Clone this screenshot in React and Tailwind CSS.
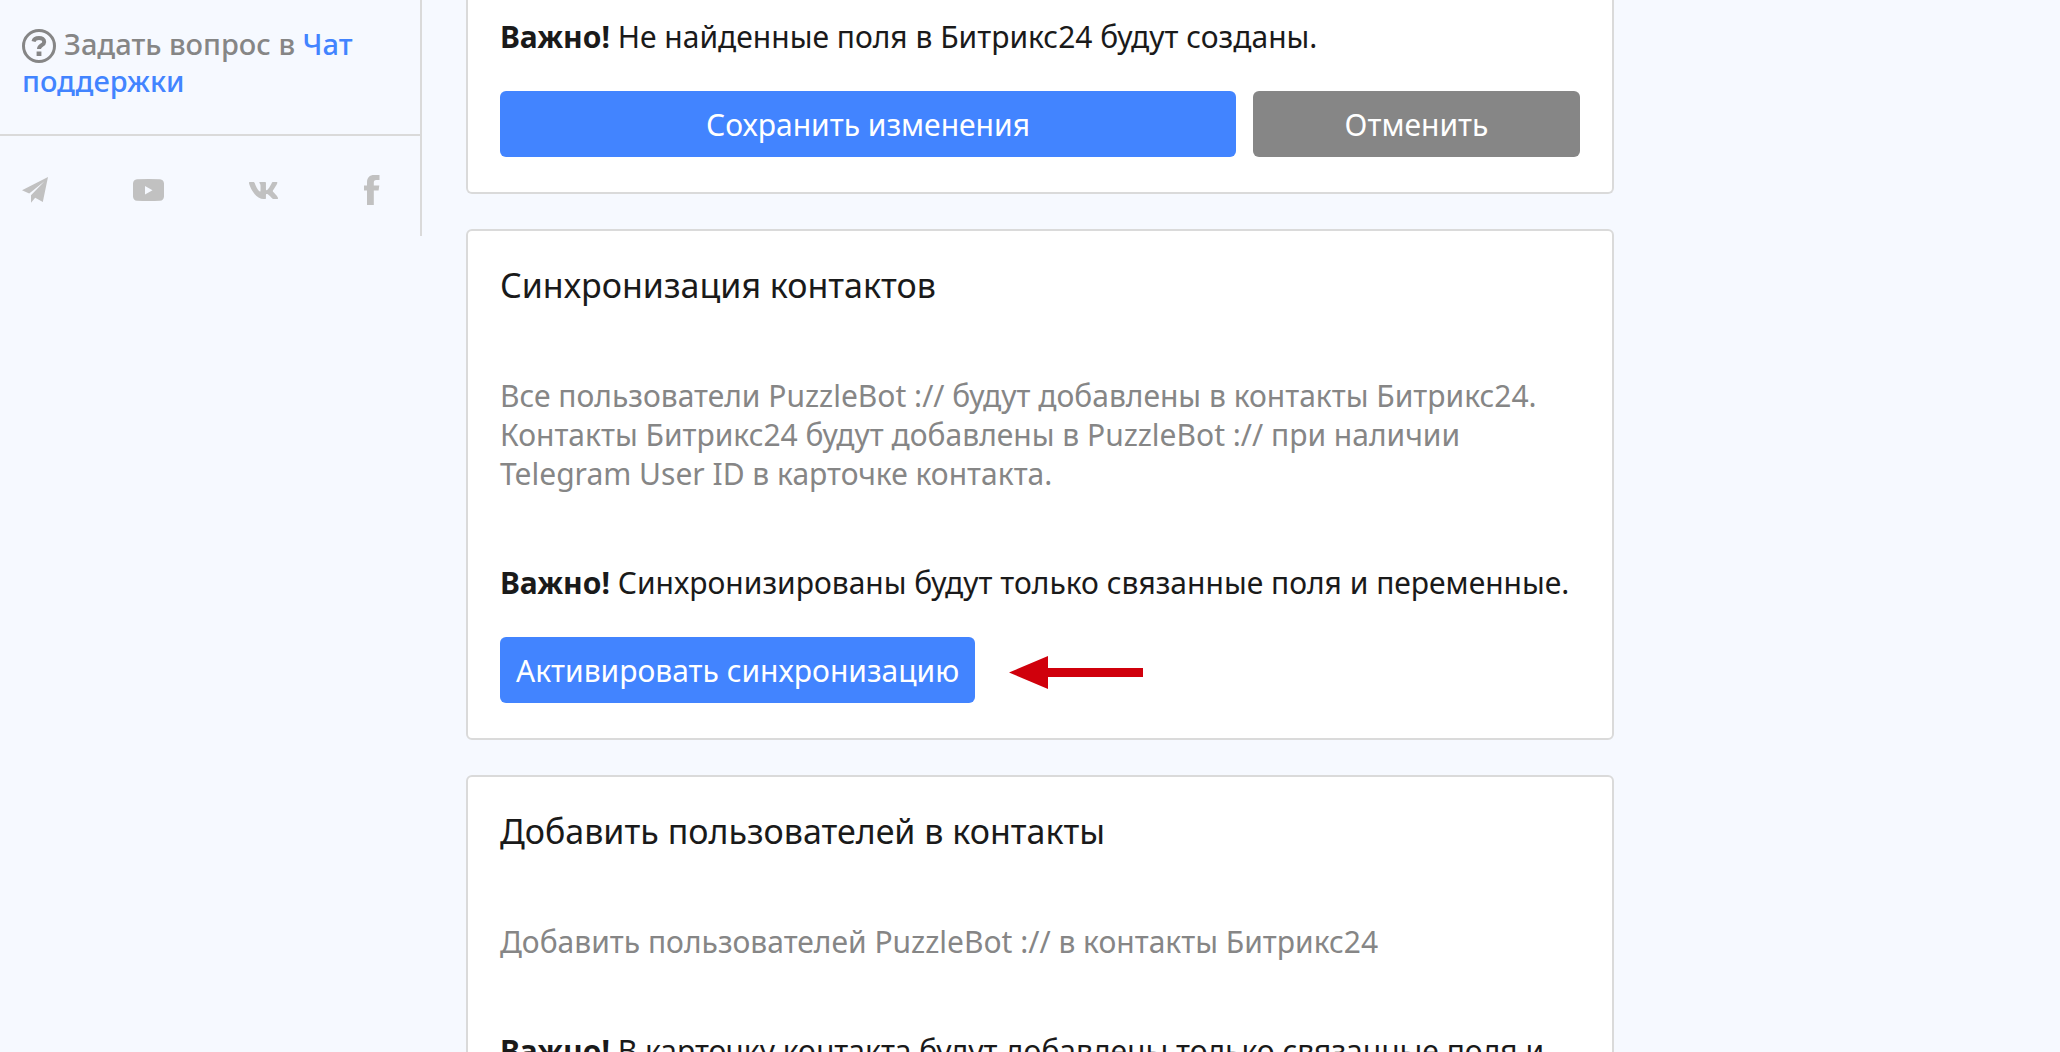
import React from "react";
import { FaVk } from "react-icons/fa";

function Card({ title, children }) {
  return (
    <section className="rounded-md border-2 border-[#dadada] bg-white px-8 pt-[34px] pb-[35px]">
      <h2 className="mb-[70px] text-[34px] leading-[41px]">{title}</h2>
      {children}
    </section>
  );
}

function Button({ className, children }) {
  return (
    <button type="button" className={"h-[66px] rounded-md px-4 text-[30px] leading-[39px] text-white " + className}>
      {children}
    </button>
  );
}

function Important({ children }) {
  return (
    <p>
      <strong className="font-bold">Важно!</strong> {children}
    </p>
  );
}

function Sidebar() {
  return (
    <aside className="w-[422px] shrink-0 self-start border-r-2 border-[#dadada]">
      <p className="border-b-2 border-[#dadada] px-[22px] pt-[26px] pb-9 text-[29px] leading-[35px] font-medium text-[#868686]">
        <svg className="mr-2 inline-block size-[34px] align-[-8px]" viewBox="0 0 34 34" fill="none" stroke="currentColor">
          <circle cx="17" cy="17" r="15.5" strokeWidth="3" />
          <path d="M11.500 12.500c.5-2.400 2.700-3.500 5.500-3.500s5.200 1.300 5.200 3.900c0 3.300-5.200 3.300-5.200 7.100" strokeWidth="4" />
          <path d="M17 22.500v4.500" strokeWidth="4.800" />
        </svg>
        Задать вопрос в{" "}
        <a href="#chat" className="text-[#4284ff]">Чат поддержки</a>
      </p>
      <nav className="flex h-[100px] items-center justify-between pt-2 pr-10 pl-[22px] text-[#c1c1c1]">
        <a href="#telegram" aria-label="Telegram">
          <svg className="size-[26px]" viewBox="0 0 26 26" fill="currentColor">
            <path d="M26 0 0 13.200l7.200 3.300L22.500 4.200 9 18.200v7.500l4.200-5 7.600 4.300Z" />
          </svg>
        </a>
        <a href="#youtube" aria-label="YouTube">
          <svg className="h-[22px] w-[31px]" viewBox="0 0 31 22" fill="currentColor">
            <path fillRule="evenodd" d="M4 .2Q15.500-.2 27 .2Q30.700.6 31 4.500V17.500Q30.700 21.400 27 21.800Q15.500 22.200 4 21.800Q.3 21.400 0 17.500V4.500Q.3.600 4 .2ZM12 7v8.500l7.500-4.300Z" />
          </svg>
        </a>
        <a href="#vk" aria-label="VK"><FaVk className="size-[31px]" /></a>
        <a href="#facebook" aria-label="Facebook">
          <svg className="h-[30px] w-4" viewBox="0 0 16 30" fill="currentColor">
            <path d="M3 30V15.500H0v-5h3V7.500C3 2.500 5.500 0 10.300 0H15.500v5H12.300c-2 0-2.500 1-2.500 2.700v2.800h5.500l-.7 5H9.800V30Z" />
          </svg>
        </a>
      </nav>
    </aside>
  );
}

export default function App() {
  return (
    <div className="flex h-screen overflow-hidden bg-[#f6f9ff] font-['Noto_Sans','Open_Sans',sans-serif] text-[30px] leading-[39px] text-[#1a1a1a]">
      <Sidebar />
      <main className="ml-11 flex w-full max-w-[1148px] flex-col gap-[35px] self-start">
        <section className="rounded-b-md border-2 border-t-0 border-[#dadada] bg-white px-8 pt-[17px] pb-[35px]">
          <Important>Не найденные поля в Битрикс24 будут созданы.</Important>
          <div className="mt-[35px] grid grid-cols-[9fr_4fr] gap-[17px]">
            <Button className="bg-[#4284ff]">Сохранить изменения</Button>
            <Button className="bg-[#868686]">Отменить</Button>
          </div>
        </section>

        <Card title="Синхронизация контактов">
          <p className="mb-[70px] text-[#868686]">
            Все пользователи PuzzleBot :// будут добавлены в контакты Битрикс24.
            <br />
            Контакты Битрикс24 будут добавлены в PuzzleBot :// при наличии
            <br />
            Telegram User ID в карточке контакта.
          </p>
          <Important>Синхронизированы будут только связанные поля и переменные.</Important>
          <div className="mt-[35px] flex items-center gap-[34px]">
            <Button className="bg-[#4284ff]">Активировать синхронизацию</Button>
            <svg className="mt-1 h-[33px] w-[134px]" viewBox="0 0 134 33" fill="#d0000c" aria-hidden="true">
              <path d="M0 16.500 39 0v12h95v9H39v12Z" />
            </svg>
          </div>
        </Card>

        <Card title="Добавить пользователей в контакты">
          <p className="mb-[70px] text-[#868686]">Добавить пользователей PuzzleBot :// в контакты Битрикс24</p>
          <Important>В карточку контакта будут добавлены только связанные поля и</Important>
        </Card>
      </main>
    </div>
  );
}
